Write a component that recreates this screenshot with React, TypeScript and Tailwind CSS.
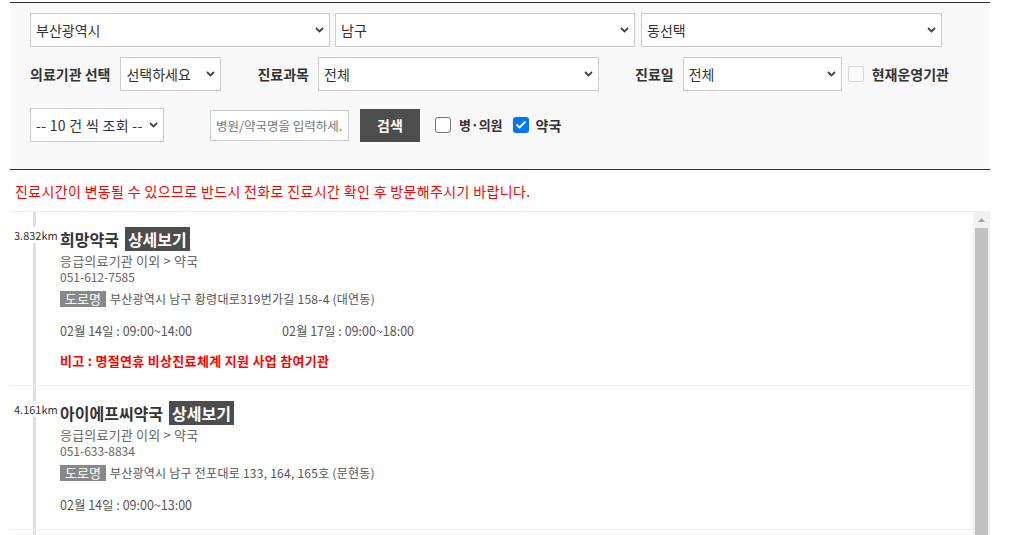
import { Check } from "lucide-react";

interface Pharmacy {
  distance: string;
  name: string;
  category: string;
  phone: string;
  address: string;
  hours: string[];
  note?: string;
}

const pharmacies: Pharmacy[] = [
  {
    distance: "3.832km",
    name: "희망약국",
    category: "응급의료기관 이외 > 약국",
    phone: "051-612-7585",
    address: "부산광역시 남구 황령대로319번가길 158-4 (대연동)",
    hours: ["02월 14일 : 09:00~14:00", "02월 17일 : 09:00~18:00"],
    note: "비고 : 명절연휴 비상진료체계 지원 사업 참여기관",
  },
  {
    distance: "4.161km",
    name: "아이에프씨약국",
    category: "응급의료기관 이외 > 약국",
    phone: "051-633-8834",
    address: "부산광역시 남구 전포대로 133, 164, 165호 (문현동)",
    hours: ["02월 14일 : 09:00~13:00"],
  },
];

function Chevron() {
  return (
    <svg width="9" height="6" viewBox="0 0 9 6" className="pointer-events-none absolute right-[6px] top-1/2 -translate-y-1/2">
      <path d="M1 1l3.5 3.5L8 1" fill="none" stroke="#444" strokeWidth="1.8" />
    </svg>
  );
}

function Select({ value, className }: { value: string; className: string }) {
  return (
    <div className={`relative h-[34px] shrink-0 ${className}`}>
      <select
        defaultValue={value}
        className="h-full w-full appearance-none border border-[#ccc] bg-white pl-[5px] pr-[14px] text-[14px] text-[#333] outline-none"
      >
        <option>{value}</option>
      </select>
      <Chevron />
    </div>
  );
}

function Box({ checked, disabled }: { checked?: boolean; disabled?: boolean }) {
  if (checked) {
    return (
      <span className="flex h-4 w-4 shrink-0 items-center justify-center rounded-[3px] bg-[#0075ff]">
        <Check className="h-3 w-3 text-white" strokeWidth={4} />
      </span>
    );
  }
  return (
    <span
      className={`block h-4 w-4 shrink-0 rounded-[3px] border ${disabled ? "border-[#d8d8d8] bg-[#fafafa]" : "border-[#767676] bg-white"}`}
    />
  );
}

function PharmacyItem({ p }: { p: Pharmacy }) {
  return (
    <li className="flex border-b border-[#eee] pt-[15px] pb-[16px]">
      <div className="w-[50px] shrink-0 pl-[4px]">
        <span className="relative z-10 block bg-white text-[11px] leading-[16px] text-[#333]">{p.distance}</span>
      </div>
      <div className="text-[12px] leading-[16px] text-[#666]">
        <div className="flex h-[24px] items-center gap-[6px]">
          <span className="text-[16px] font-bold text-[#333]">{p.name}</span>
          <span className="bg-[#4d4d4d] px-[3px] text-[16px] leading-[24px] font-bold text-white">상세보기</span>
        </div>
        <p className="mt-[2px] text-[13px] tracking-[0.2px]">{p.category}</p>
        <p>{p.phone}</p>
        <div className="mt-[6px] flex items-center gap-[4px]">
          <span className="bg-[#888] px-[5px] text-[13px] leading-[16px] text-white">도로명</span>
          <span className="tracking-[0.25px] text-[#555]">{p.address}</span>
        </div>
        <div className="mt-[16px] flex text-[12.5px] text-[#555]">
          {p.hours.map((h) => (
            <span key={h} className="w-[222px]">
              {h}
            </span>
          ))}
        </div>
        {p.note && <p className="mt-[14px] text-[13px] tracking-[0.3px] font-bold text-[#f00]">{p.note}</p>}
      </div>
    </li>
  );
}

export default function App() {
  return (
    <div className="min-h-[535px] bg-white pt-[2px] font-['Noto_Sans_CJK_KR',sans-serif] text-[#333]">
      <div className="ml-[10px] w-[980px]">
        <div className="border-y border-[#333] bg-[#f9f9f9] pl-[20px] pt-[10px] pb-[27px]">
          <div className="flex">
            <Select value="부산광역시" className="mr-[5px] w-[300px]" />
            <Select value="남구" className="mr-[6px] w-[300px]" />
            <Select value="동선택" className="w-[301px]" />
          </div>

          <div className="mt-[10px] flex items-center text-[14px] font-bold text-[#333]">
            <span>의료기관 선택</span>
            <Select value="선택하세요" className="ml-[10px] w-[101px] font-normal" />
            <span className="ml-[36px]">진료과목</span>
            <Select value="전체" className="ml-[9px] w-[281px] font-normal" />
            <span className="ml-[36px]">진료일</span>
            <Select value="전체" className="ml-[9px] w-[159px] font-normal" />
            <span className="ml-[6px]">
              <Box disabled />
            </span>
            <span className="ml-[8px]">현재운영기관</span>
          </div>

          <div className="mt-[17px] flex items-center">
            <Select value="-- 10 건 씩 조회 --" className="w-[134px] tracking-[0.3px]" />
            <input
              placeholder="병원/약국명을 입력하세."
              className="ml-[46px] h-[31px] w-[139px] border border-[#ccc] bg-white px-[5px] text-[12.5px] text-[#333] outline-none placeholder:text-[#777]"
            />
            <button type="button" className="ml-[11px] h-[33px] w-[60px] bg-[#4d4d4d] text-[14px] font-bold text-white">
              검색
            </button>
            <label className="ml-[15px] flex items-center gap-[8px] text-[13px] font-bold text-[#333]">
              <Box />
              병·의원
            </label>
            <label className="ml-[10px] flex items-center gap-[7px] text-[14px] font-bold text-[#333]">
              <Box checked />
              약국
            </label>
          </div>
        </div>

        <p className="mt-[12px] mb-[11px] pl-[5px] text-[14px] leading-[18px] tracking-[0.35px] text-[#f00]">
          진료시간이 변동될 수 있으므로 반드시 전화로 진료시간 확인 후 방문해주시기 바랍니다.
        </p>

        <div className="flex h-[324px] overflow-hidden">
          <div className="relative flex-1 border-t border-[#eee]">
            <div className="absolute top-0 bottom-0 left-[23px] w-[3px] bg-[#e0e0e0]" />
            <ul className="relative">
              {pharmacies.map((p) => (
                <PharmacyItem key={p.name} p={p} />
              ))}
            </ul>
          </div>
          <div className="flex w-[17px] flex-col bg-[#f1f1f1]">
            <div className="flex h-[17px] items-center justify-center">
              <svg width="7" height="4" viewBox="0 0 7 4">
                <path d="M3.5 0L7 4H0z" fill="#a3a3a3" />
              </svg>
            </div>
            <div className="mx-[2px] flex-1 bg-[#c1c1c1]" />
          </div>
        </div>
      </div>
    </div>
  );
}
